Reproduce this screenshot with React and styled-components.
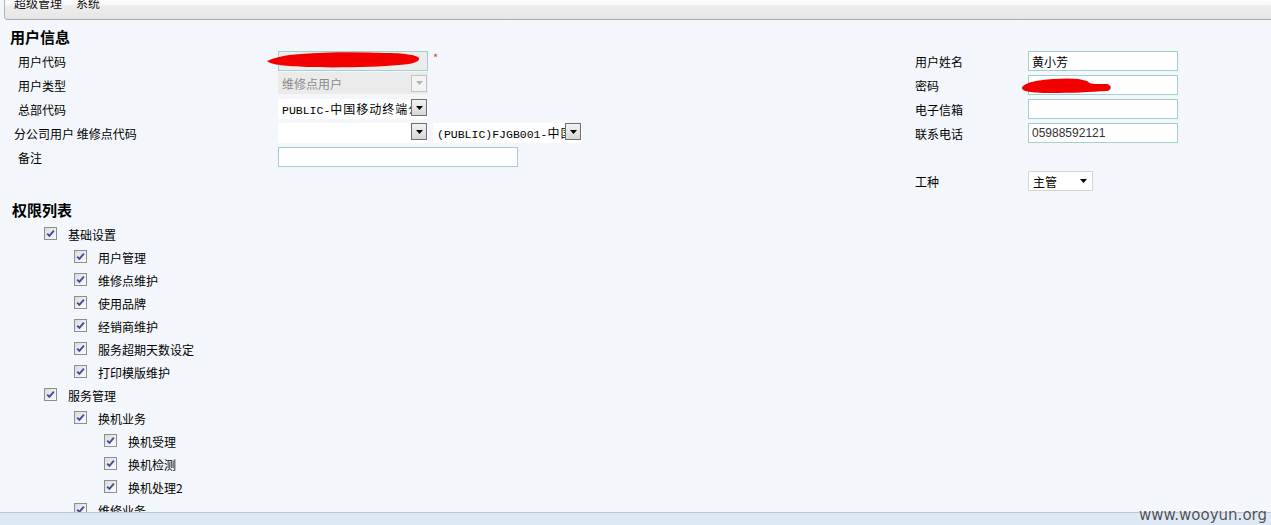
import React from "react";
import styled, { createGlobalStyle } from "styled-components";

const GlobalStyle = createGlobalStyle`
  html, body { margin: 0; padding: 0; height: 100%; }
  body {
    background: #f3f7fb;
    font-family: "Noto Sans CJK SC", "Noto Sans", sans-serif;
    font-size: 12px;
    color: #000;
    overflow: hidden;
  }
  #root { height: 100%; }
`;

const Page = styled.div`
  position: relative;
  height: 100vh;
  display: flex;
  flex-direction: column;
  overflow: hidden;
`;

const TopBar = styled.div`
  flex: 0 0 19px;
  margin-left: 4px;
  display: flex;
  align-items: flex-start;
  gap: 14px;
  padding-left: 9px;
  border-left: 1px solid #b4b4b4;
  border-bottom: 1px solid #a9a9a9;
  border-bottom-left-radius: 4px;
  background: linear-gradient(#fcfcfc 0, #f7f7f7 25%, #ececec 32%, #e7e7e7 100%);
  overflow: hidden;
`;

const Crumb = styled.span`
  margin-top: -6px;
  line-height: 18px;
  font-size: 12px;
  color: #111;
`;

const Main = styled.div`
  flex: 1 1 auto;
  overflow: hidden;
  padding-left: 10px;
`;

const SectionTitle = styled.div`
  margin-top: ${(p) => p.$top}px;
  padding-left: ${(p) => p.$indent || 0}px;
  height: 20px;
  line-height: 20px;
  font-size: 15px;
  font-weight: 700;
  color: #000;
`;

const FormGrid = styled.div`
  margin-top: 2px;
  display: grid;
  grid-template-columns: 268px 637px 113px 1fr;
  grid-auto-rows: 24px;
`;

const Label = styled.div`
  grid-row: ${(p) => p.$row};
  grid-column: ${(p) => p.$col};
  display: flex;
  align-items: center;
  padding-left: ${(p) => p.$pad || 0}px;
  white-space: nowrap;
  font-size: 12px;
`;

const Cell = styled.div`
  grid-row: ${(p) => p.$row};
  grid-column: ${(p) => p.$col};
  display: flex;
  align-items: center;
  gap: 5px;
  transform: translateY(${(p) => p.$shift || 0}px);
`;

const InputWrap = styled.div`
  position: relative;
  display: flex;
`;

const TextInput = styled.input`
  box-sizing: border-box;
  width: ${(p) => p.$width || 150}px;
  height: 20px;
  margin: 0;
  padding: 0 3px;
  border: 1px solid #a4cfcf;
  background: ${(p) => (p.$gray ? "#ececec" : "#ffffff")};
  font-family: ${(p) =>
    p.$latin ? '"Liberation Sans", Arial, sans-serif' : '"Noto Sans CJK SC", sans-serif'};
  font-size: 12px;
  color: ${(p) => (p.$latin ? "#333" : "#000")};
  outline: none;
`;

const Scribble = styled.svg`
  position: absolute;
  pointer-events: none;
`;

const Required = styled.span`
  color: #d23a3a;
  font-size: 11px;
  line-height: 11px;
  align-self: flex-start;
  margin-top: 3px;
`;

const SelectBox = styled.div`
  box-sizing: border-box;
  width: ${(p) => p.$width}px;
  height: ${(p) => (p.$disabled ? 22 : 20)}px;
  display: flex;
  align-items: ${(p) => (p.$disabled ? "center" : "flex-start")};
  padding-right: 1px;
  background: ${(p) => (p.$disabled ? "#ebebeb" : "#ffffff")};
  border: ${(p) => (p.$bordered ? "1px solid #d6d6d6" : "none")};
`;

const SelectText = styled.span`
  flex: 1 1 auto;
  overflow: hidden;
  white-space: nowrap;
  padding-left: 4px;
  line-height: 19px;
  font-family: ${(p) =>
    p.$mono ? '"Liberation Mono", "Noto Sans CJK SC", monospace' : '"Noto Sans CJK SC", sans-serif'};
  font-size: ${(p) => (p.$mono ? 11.5 : 12)}px;
  color: ${(p) => (p.$disabled ? "#8a8a8a" : "#000")};
`;

const Cjk = styled.span`
  font-family: "Noto Sans CJK SC", sans-serif;
  font-size: 12px;
  letter-spacing: 1px;
`;

const DropButton = styled.span`
  box-sizing: border-box;
  flex: 0 0 16px;
  height: 17px;
  display: flex;
  align-items: center;
  justify-content: center;
  border: 1px solid ${(p) => (p.$disabled ? "#c4c4c4" : "#6e6e6e")};
  background: ${(p) =>
    p.$disabled ? "#f3f3f3" : "linear-gradient(#f2f2f2, #d8d8d8)"};
`;

const PlainArrow = styled.span`
  flex: 0 0 16px;
  display: flex;
  align-items: center;
  justify-content: center;
  align-self: center;
`;

const Tree = styled.div`
  margin-top: 3px;
  display: flex;
  flex-direction: column;
`;

const TreeRow = styled.div`
  height: 23px;
  display: flex;
  align-items: center;
  padding-left: ${(p) => 34 + p.$level * 30}px;
  white-space: nowrap;
`;

const Check = styled.span`
  box-sizing: border-box;
  flex: 0 0 13px;
  width: 13px;
  height: 13px;
  margin-right: 11px;
  margin-bottom: 3px;
  border: 1px solid #8c8e90;
  background: linear-gradient(135deg, #d9dadc 0%, #eeeeee 55%, #fbfbfb 100%);
  display: flex;
  align-items: center;
  justify-content: center;
`;

const TreeLabel = styled.span`
  font-size: 12px;
  line-height: 16px;
  color: #000;
`;

const StatusBar = styled.div`
  flex: 0 0 12px;
  border-top: 1px solid #bfc6cd;
  background: #dde8f5;
`;

const Watermark = styled.div`
  position: absolute;
  right: 4px;
  bottom: 1px;
  font-family: "DejaVu Sans", Verdana, sans-serif;
  font-size: 15px;
  line-height: 17px;
  color: #4f5358;
  text-shadow: 0 0 2px #ffffff;
`;

const Arrow = ({ color = "#000" }) => (
  <svg width="7" height="4" viewBox="0 0 7 4">
    <path d="M0 0 H7 L3.5 4 Z" fill={color} />
  </svg>
);

const splitScripts = (text) =>
  text.split(/([\u4e00-\u9fff]+)/).map((part, i) =>
    /[\u4e00-\u9fff]/.test(part) ? <Cjk key={i}>{part}</Cjk> : part
  );

const Select = ({ width, value, disabled, mono, bordered, plain }) => (
  <SelectBox $width={width} $disabled={disabled} $bordered={bordered}>
    <SelectText $mono={mono} $disabled={disabled}>
      {mono ? splitScripts(value) : value}
    </SelectText>
    {plain ? (
      <PlainArrow>
        <Arrow />
      </PlainArrow>
    ) : (
      <DropButton $disabled={disabled}>
        <Arrow color={disabled ? "#b4b4b4" : "#000"} />
      </DropButton>
    )}
  </SelectBox>
);

const CheckMark = () => (
  <svg width="9" height="9" viewBox="0 0 9 9">
    <path
      d="M1.2 4.6 L3.4 6.9 L7.9 1.6"
      fill="none"
      stroke="#3a4f9e"
      strokeWidth="1.9"
      strokeLinejoin="miter"
    />
  </svg>
);

const tree = [
  { level: 0, label: "基础设置" },
  { level: 1, label: "用户管理" },
  { level: 1, label: "维修点维护" },
  { level: 1, label: "使用品牌" },
  { level: 1, label: "经销商维护" },
  { level: 1, label: "服务超期天数设定" },
  { level: 1, label: "打印模版维护" },
  { level: 0, label: "服务管理" },
  { level: 1, label: "换机业务" },
  { level: 2, label: "换机受理" },
  { level: 2, label: "换机检测" },
  { level: 2, label: "换机处理2" },
  { level: 1, label: "维修业务" },
  { level: 2, label: "维修受理" },
  { level: 2, label: "维修检测" },
];

export default function App() {
  return (
    <>
      <GlobalStyle />
      <Page>
        <TopBar>
          <Crumb>超级管理</Crumb>
          <Crumb>系统</Crumb>
        </TopBar>
        <Main>
          <SectionTitle $top={7}>用户信息</SectionTitle>
          <FormGrid>
            <Label $row={1} $col={1} $pad={8}>用户代码</Label>
            <Cell $row={1} $col={2}>
              <InputWrap>
                <TextInput $gray readOnly defaultValue="" />
                <Scribble
                  width="153"
                  height="17"
                  viewBox="0 0 153 17"
                  style={{ left: -11, top: 1 }}
                >
                  <path
                    d="M0 9 C6 6 18 3 34 2 C60 0 90 0 118 1 C136 1 150 3 152 6 C153 9 148 12 132 13 C110 15 70 16 40 15 C20 14 4 13 0 9 Z"
                    fill="#f20000"
                  />
                </Scribble>
              </InputWrap>
              <Required>*</Required>
            </Cell>

            <Label $row={2} $col={1} $pad={8}>用户类型</Label>
            <Cell $row={2} $col={2} $shift={-2}>
              <Select width={150} value="维修点用户" disabled />
            </Cell>

            <Label $row={3} $col={1} $pad={8}>总部代码</Label>
            <Cell $row={3} $col={2}>
              <Select width={150} value="PUBLIC-中国移动终端公司" mono />
            </Cell>

            <Label $row={4} $col={1} $pad={4}>分公司用户 维修点代码</Label>
            <Cell $row={4} $col={2}>
              <Select width={150} value="" mono />
              <Select width={149} value="(PUBLIC)FJGB001-中国移动" mono />
            </Cell>

            <Label $row={5} $col={1} $pad={8}>备注</Label>
            <Cell $row={5} $col={2}>
              <TextInput $width={240} readOnly defaultValue="" />
            </Cell>

            <Label $row={1} $col={3}>用户姓名</Label>
            <Cell $row={1} $col={4}>
              <TextInput readOnly defaultValue="黄小芳" />
            </Cell>

            <Label $row={2} $col={3}>密码</Label>
            <Cell $row={2} $col={4}>
              <InputWrap>
                <TextInput readOnly defaultValue="" />
                <Scribble
                  width="92"
                  height="16"
                  viewBox="0 0 92 16"
                  style={{ left: -7, top: 3 }}
                >
                  <path
                    d="M1 10 C2 5 16 2 32 1 C46 0 58 0 66 3 C68 5 70 6 74 6 L86 6 C91 7 91 12 86 13 C70 14 50 15 30 15 C14 15 1 14 1 10 Z"
                    fill="#f20000"
                  />
                </Scribble>
              </InputWrap>
            </Cell>

            <Label $row={3} $col={3}>电子信箱</Label>
            <Cell $row={3} $col={4}>
              <TextInput readOnly defaultValue="" />
            </Cell>

            <Label $row={4} $col={3}>联系电话</Label>
            <Cell $row={4} $col={4}>
              <TextInput $latin readOnly defaultValue="05988592121" />
            </Cell>

            <Label $row={6} $col={3}>工种</Label>
            <Cell $row={6} $col={4}>
              <Select width={65} value="主管" bordered plain />
            </Cell>
          </FormGrid>

          <SectionTitle $top={7} $indent={2}>权限列表</SectionTitle>
          <Tree>
            {tree.map((item, i) => (
              <TreeRow key={i} $level={item.level}>
                <Check>
                  <CheckMark />
                </Check>
                <TreeLabel>{item.label}</TreeLabel>
              </TreeRow>
            ))}
          </Tree>
        </Main>
        <StatusBar />
        <Watermark>www.wooyun.org</Watermark>
      </Page>
    </>
  );
}
